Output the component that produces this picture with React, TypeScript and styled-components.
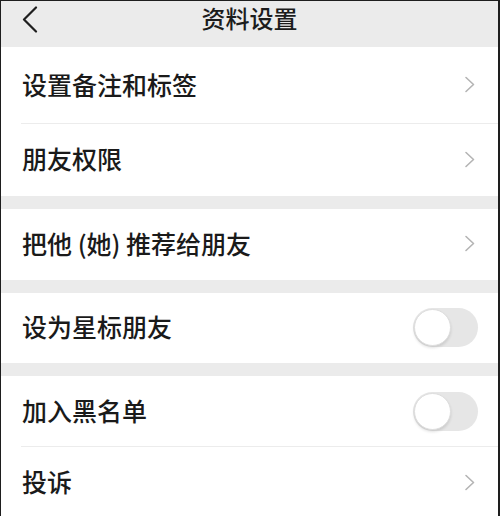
import React from "react";
import styled, { createGlobalStyle } from "styled-components";

const GlobalStyle = createGlobalStyle`
  html, body {
    margin: 0;
    padding: 0;
    background: #ffffff;
  }
  body {
    font-family: "Noto Sans CJK SC", "Noto Sans", sans-serif;
  }
`;

const Page = styled.div`
  width: 500px;
  height: 516px;
  box-sizing: border-box;
  border-top: 1px solid #1e1e1e;
  border-left: 1px solid #1e1e1e;
  border-right: 2px solid #1e1e1e;
  background: #ebebeb;
  overflow: hidden;
  display: flex;
  flex-direction: column;
`;

const Header = styled.div`
  height: 46px;
  flex-shrink: 0;
  display: grid;
  grid-template-columns: 60px 1fr 60px;
  align-items: start;
  background: #ebebeb;
`;

const Back = styled.div`
  padding: 5px 0 0 20px;
  display: flex;
`;

const Title = styled.div`
  text-align: center;
  font-size: 24px;
  line-height: 34px;
  color: #1c1c1c;
  font-weight: 500;
`;

const Group = styled.div`
  background: #ffffff;
  flex-shrink: 0;
`;

const Gap = styled.div`
  height: 13px;
  flex-shrink: 0;
  background: #ebebeb;
`;

const Row = styled.div<{ $h: number; $divider?: boolean }>`
  height: ${(p) => p.$h}px;
  box-sizing: border-box;
  display: flex;
  align-items: center;
  justify-content: space-between;
  padding: 0 20px 0 21px;
  position: relative;
  ${(p) =>
    p.$divider &&
    `&::after {
      content: "";
      position: absolute;
      left: 20px;
      right: 0;
      bottom: 0;
      height: 1px;
      background: #ececec;
    }`}
`;

const Label = styled.span`
  font-size: 25px;
  line-height: 30px;
  margin-bottom: 4px;
  color: #1a1a1a;
  font-weight: 500;
`;

const Track = styled.div<{ $on?: boolean }>`
  width: 65px;
  height: 39px;
  border-radius: 20px;
  background: ${(p) => (p.$on ? "#07c160" : "#e6e6e6")};
  display: flex;
  align-items: center;
  box-sizing: border-box;
  padding: 0 1px;
  margin-bottom: 1px;
`;

const Knob = styled.div`
  width: 37px;
  height: 37px;
  border-radius: 50%;
  background: #ffffff;
  box-sizing: border-box;
  border: 1px solid #dedede;
  box-shadow: 0 2px 3px rgba(0, 0, 0, 0.12);
`;

const Chevron = () => (
  <svg width="12" height="17" viewBox="0 0 12 17" style={{ marginRight: 2, marginBottom: 2 }}>
    <polyline
      points="2,1.5 9.5,8.5 2,15.5"
      fill="none"
      stroke="#b4b4b4"
      strokeWidth="1.6"
      strokeLinecap="round"
      strokeLinejoin="round"
    />
  </svg>
);

const BackIcon = () => (
  <svg width="18" height="28" viewBox="0 0 18 28">
    <polyline
      points="15,1.5 3,13.5 15,25.5"
      fill="none"
      stroke="#1e1e1e"
      strokeWidth="2.2"
      strokeLinecap="round"
      strokeLinejoin="round"
    />
  </svg>
);

const Toggle = ({ on }: { on?: boolean }) => (
  <Track $on={on}>
    <Knob />
  </Track>
);

const App = (): React.JSX.Element => {
  return (
    <>
      <GlobalStyle />
      <Page>
        <Header>
          <Back>
            <BackIcon />
          </Back>
          <Title>资料设置</Title>
          <div />
        </Header>
        <Group>
          <Row $h={77} $divider>
            <Label>设置备注和标签</Label>
            <Chevron />
          </Row>
          <Row $h={72}>
            <Label>朋友权限</Label>
            <Chevron />
          </Row>
        </Group>
        <Gap />
        <Group>
          <Row $h={71}>
            <Label>把他 (她) 推荐给朋友</Label>
            <Chevron />
          </Row>
        </Group>
        <Gap />
        <Group>
          <Row $h={70}>
            <Label>设为星标朋友</Label>
            <Toggle />
          </Row>
        </Group>
        <Gap />
        <Group>
          <Row $h={71} $divider>
            <Label>加入黑名单</Label>
            <Toggle />
          </Row>
          <Row $h={72}>
            <Label>投诉</Label>
            <Chevron />
          </Row>
        </Group>
      </Page>
    </>
  );
};

export default App;
